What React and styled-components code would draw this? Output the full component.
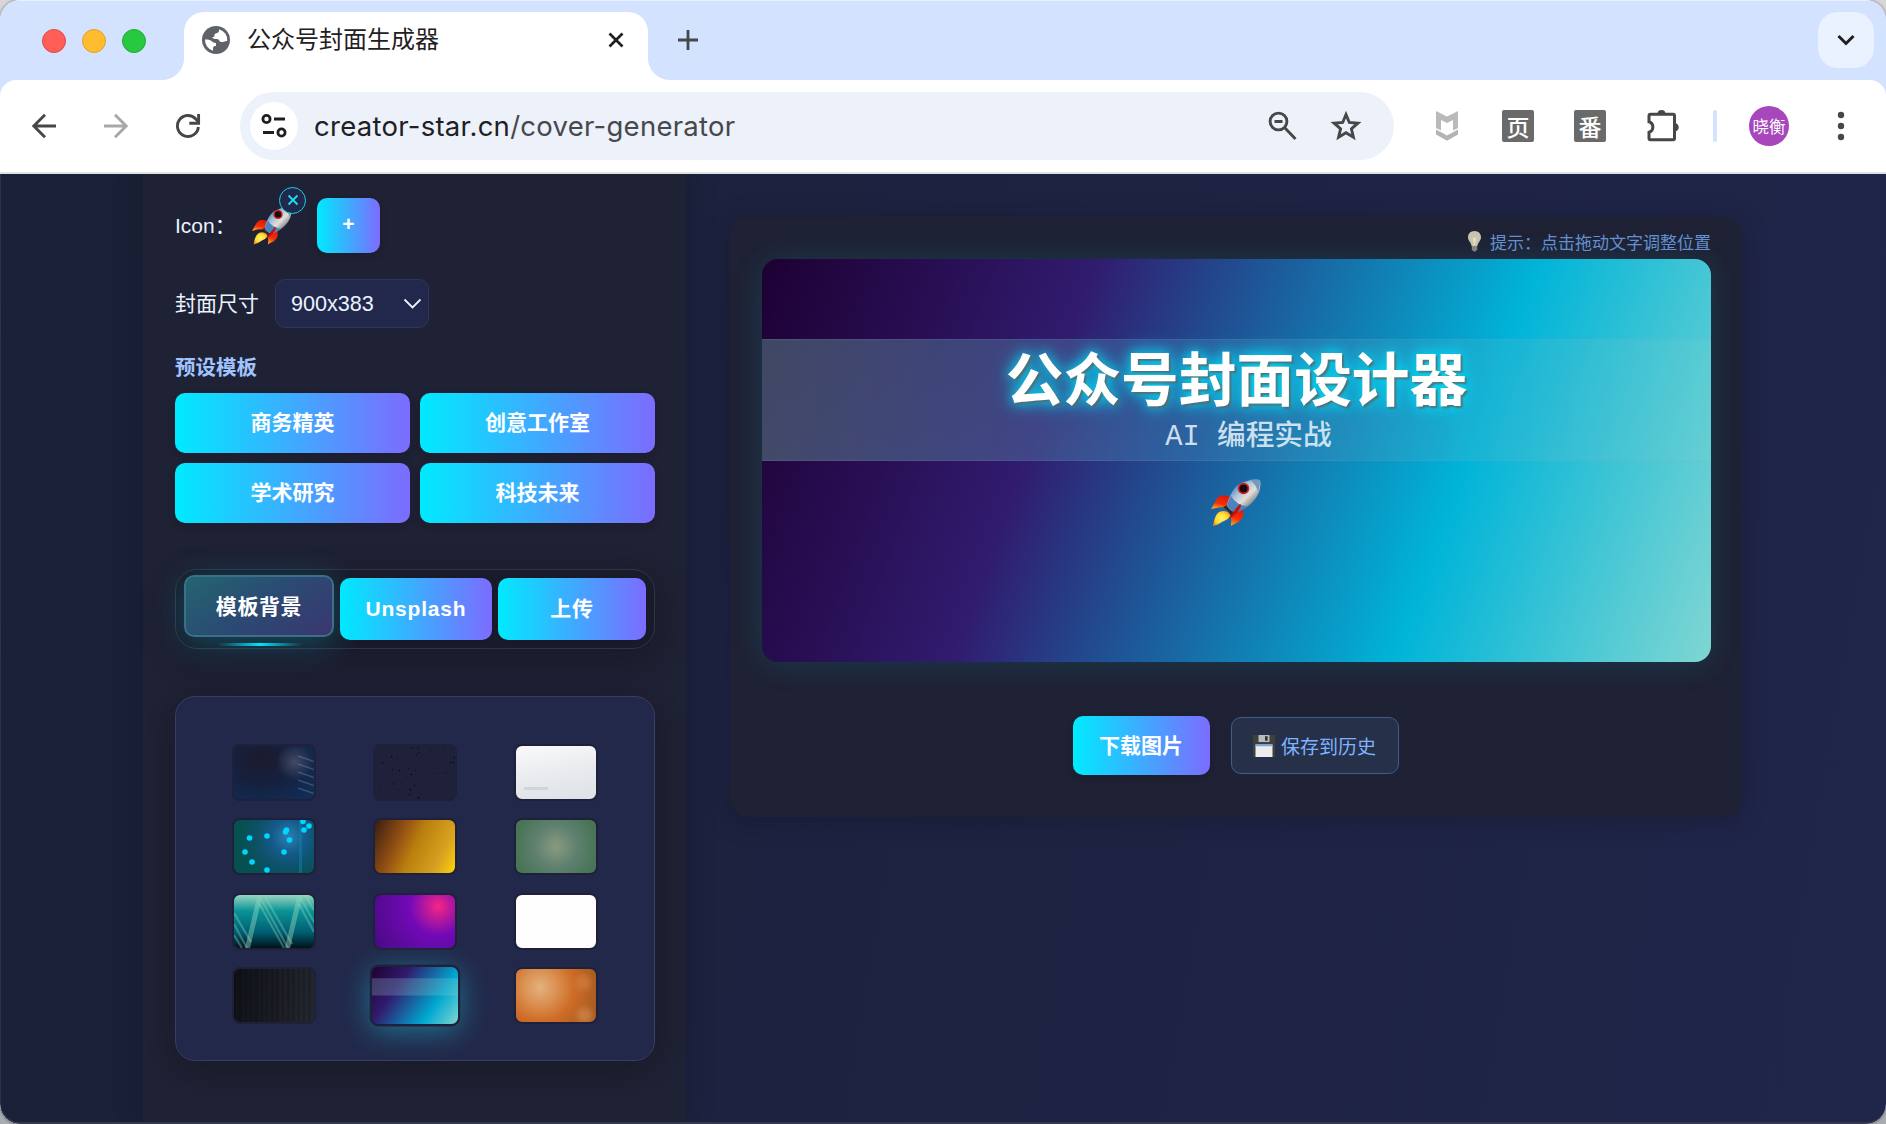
import React from "react";
import styled, { createGlobalStyle, css } from "styled-components";

const Global = createGlobalStyle`
  * { box-sizing: border-box; }
  body {
    margin: 0;
    background: linear-gradient(180deg, #d9d6d8 0%, #a9adb1 100%);
    font-family: "Liberation Sans", "Noto Sans CJK SC", sans-serif;
    overflow: hidden;
  }
  button { font-family: inherit; border: 0; margin: 0; padding: 0; }
  svg { display: block; flex: none; }
`;

const accent = "linear-gradient(90deg, #00eaff 0%, #7c6cff 100%)";

/* ---------- browser window ---------- */

const Window = styled.div`
  display: flex;
  flex-direction: column;
  width: 1886px;
  height: 1124px;
  border-radius: 20px;
  overflow: hidden;
  background: #d3e2ff;
  box-shadow: 0 0 3px rgba(0, 0, 0, 0.5);
`;

const TabStrip = styled.header`
  display: flex;
  align-items: flex-start;
  height: 80px;
  flex: none;
  padding: 11px 12px 0 42px;
  background: #d3e2ff;
  border-top: 1px solid #eaf0fc;
`;

const Lights = styled.div`
  display: flex;
  gap: 16px;
  width: 142px;
  padding-top: 17px;
`;

const Light = styled.span`
  width: 24px;
  height: 24px;
  border-radius: 50%;
  background: ${(p) => p.$fill};
  border: 1px solid ${(p) => p.$edge};
`;

const Tab = styled.div`
  position: relative;
  display: flex;
  align-items: center;
  width: 464px;
  height: 68px;
  padding: 0 22px 12px 18px;
  border-radius: 20px 20px 0 0;
  background: #fff;

  &::before,
  &::after {
    content: "";
    position: absolute;
    bottom: 0;
    width: 22px;
    height: 22px;
  }
  &::before {
    left: -22px;
    background: radial-gradient(circle at 0 0, transparent 21.5px, #fff 22.5px);
  }
  &::after {
    right: -22px;
    background: radial-gradient(circle at 100% 0, transparent 21.5px, #fff 22.5px);
  }
`;

const TabTitle = styled.span`
  flex: 1;
  margin-left: 17px;
  font: 400 24px/34px "Noto Sans CJK SC", sans-serif;
  color: #1f2023;
  white-space: nowrap;
  padding-bottom: 4px;
`;

const NewTab = styled.div`
  padding: 17px 0 0 29px;
  flex: 1;
`;

const TabSearch = styled.div`
  display: grid;
  place-items: center;
  width: 56px;
  height: 56px;
  border-radius: 20px;
  background: #ebf2ff;
`;

const Toolbar = styled.div`
  display: flex;
  align-items: center;
  height: 94px;
  flex: none;
  padding: 0 28px;
  background: #fff;
  border-radius: 16px 16px 0 0;
  border-bottom: 2px solid #dfe2e0;
`;

const NavIcons = styled.div`
  display: flex;
  gap: 40px;
  width: 212px;
`;

const Omnibox = styled.div`
  display: flex;
  align-items: center;
  width: 1154px;
  height: 68px;
  padding: 0 32px 0 10px;
  border-radius: 34px;
  background: #ecf1fa;
`;

const SiteInfo = styled.span`
  display: grid;
  place-items: center;
  width: 48px;
  height: 48px;
  border-radius: 50%;
  background: #fff;
`;

const Url = styled.span`
  flex: 1;
  margin-left: 16px;
  font: 400 27.5px/36px Inter, "Noto Sans", sans-serif;
  letter-spacing: 0.27px;
  color: #1f2023;
  white-space: nowrap;
`;

const UrlPath = styled.span`
  color: #47484b;
`;

const OmniIcons = styled.div`
  display: flex;
  align-items: center;
  gap: 32px;
`;

const Extensions = styled.div`
  display: flex;
  align-items: center;
  gap: 40px;
  padding-left: 42px;
`;

const ShieldSlot = styled.span`
  width: 26px;
`;

const Profile = styled.div`
  display: flex;
  align-items: center;
  margin-left: 33px;
`;

const ExtBadge = styled.span`
  display: grid;
  place-items: center;
  width: 32px;
  height: 32px;
  border-radius: 2px;
  background: #6a6a6a;
  color: #fff;
  font: 500 23px/30px "Noto Sans CJK SC", sans-serif;
`;

const Divider = styled.span`
  width: 4px;
  height: 32px;
  margin-right: 32px;
  border-radius: 2px;
  background: #d3e2ff;
`;

const Avatar = styled.span`
  display: grid;
  place-items: center;
  width: 40px;
  height: 40px;
  margin-right: 48px;
  border-radius: 50%;
  background: #a846bc;
  color: #fff;
  font: 400 16.5px/24px "Noto Sans CJK SC", sans-serif;
`;

/* ---------- page ---------- */

const Page = styled.main`
  display: flex;
  align-items: flex-start;
  flex: 1;
  min-height: 0;
  padding-left: 142px;
  gap: 44px;
  overflow: hidden;
  background: linear-gradient(100deg, #1a2035 0%, #1d2240 45%, #20264a 100%);
  border-left: 1px solid #2e3348;
  border-bottom: 2px solid #34384c;
  border-radius: 0 0 20px 20px;
`;

const Sidebar = styled.aside`
  width: 543px;
  height: 948px;
  padding: 24px 31px 0 32px;
  background: #1f2134;
  box-shadow: 0 0 24px rgba(15, 18, 32, 0.35);
`;

const FieldRow = styled.div`
  display: flex;
  align-items: center;
  margin-bottom: ${(p) => p.$after}px;
`;

const Label = styled.span`
  width: ${(p) => p.$width}px;
  font-size: 21px;
  line-height: 30px;
  color: #eaf4ff;
  white-space: nowrap;
`;

const IconSlot = styled.div`
  position: relative;
  width: 40px;
  height: 40px;
  margin-right: 25px;
`;

const RemoveBadge = styled.span`
  position: absolute;
  top: -19px;
  right: -14px;
  display: grid;
  place-items: center;
  width: 27px;
  height: 27px;
  border: 1.5px solid #1ccfe6;
  border-radius: 50%;
  background: #20284c;
`;

const GradientButton = styled.button`
  width: ${(p) => (p.$width ? p.$width + "px" : "auto")};
  height: ${(p) => p.$height}px;
  border-radius: 10px;
  background: ${accent};
  color: #fff;
  font-size: 21px;
  font-weight: 700;
  line-height: 30px;
  letter-spacing: ${(p) => p.$spacing || 0}px;
  padding-bottom: ${(p) => p.$lift || 0}px;
  white-space: nowrap;
  box-shadow: 0 3px 10px rgba(0, 0, 0, 0.12);
`;

const SizeSelect = styled.div`
  display: flex;
  align-items: center;
  justify-content: space-between;
  width: 154px;
  height: 49px;
  padding: 0 6px 0 15px;
  border: 1px solid #2d355e;
  border-radius: 10px;
  background: #21284b;
  color: #eaf4ff;
  font-size: 21.6px;
`;

const SectionTitle = styled.h2`
  margin: 0 0 10px;
  font-size: 20.5px;
  line-height: 30px;
  font-weight: 700;
  color: #a0c4ff;
`;

const PresetGrid = styled.div`
  display: grid;
  grid-template-columns: 1fr 1fr;
  gap: 10px;
  margin-bottom: 46px;
`;

const TabBar = styled.div`
  display: flex;
  gap: 6px;
  height: 80px;
  margin-bottom: 47px;
  padding: 8px 8px;
  border: 1px solid #303447;
  border-radius: 22px;
  background: #191c2b;
  box-shadow: 0 10px 36px rgba(0, 0, 0, 0.22);
`;

const ActiveTab = styled.button`
  position: relative;
  width: 150px;
  height: 62px;
  margin-top: -3px;
  padding-bottom: 2px;
  border: 2px solid #39718a;
  border-radius: 10px;
  background: linear-gradient(145deg, #23666f 0%, #2b4a73 50%, #3b366f 100%);
  background-origin: border-box;
  color: #fff;
  font-size: 21px;
  font-weight: 700;
  letter-spacing: 0.6px;
  box-shadow: 0 6px 34px rgba(0, 229, 255, 0.24);

  &::after {
    content: "";
    position: absolute;
    left: 32px;
    right: 30px;
    bottom: -11px;
    height: 3px;
    background: linear-gradient(90deg, transparent, #00e5ff, transparent);
  }
`;

const Gallery = styled.div`
  display: grid;
  grid-template-columns: repeat(3, 1fr);
  grid-auto-rows: 57px;
  row-gap: 17.3px;
  justify-items: center;
  height: 365px;
  padding: 47px 27px 0;
  border: 1px solid #383e61;
  border-radius: 20px;
  background: #222849;
  box-shadow: 0 8px 30px rgba(0, 0, 0, 0.2);
`;

const Thumb = styled.div`
  width: 84px;
  height: 57px;
  border: 2px solid #1e2139;
  border-radius: 8px;
  overflow: hidden;
  background: ${(p) => p.$bg};
  background-origin: padding-box;
  ${(p) =>
    p.$active &&
    css`
      transform: scale(1.075);
      box-shadow: 0 5px 28px rgba(30, 215, 245, 0.42);
    `}
`;

/* ---------- preview ---------- */

const PreviewCard = styled.section`
  width: 1012px;
  height: 600px;
  margin-top: 43px;
  padding: 8px 31px 0 32px;
  border-radius: 18px;
  background: #1f2134;
  box-shadow: 0 4px 24px rgba(15, 18, 36, 0.35);
`;

const Hint = styled.div`
  display: flex;
  justify-content: flex-end;
  align-items: center;
  gap: 8px;
  height: 32px;
  margin-bottom: 2px;
  font-size: 17px;
  color: #6290d0;
  white-space: nowrap;
`;

const Cover = styled.div`
  height: 403px;
  padding-top: 80px;
  border-radius: 16px;
  overflow: hidden;
  background: linear-gradient(110deg, #1d0033 0%, #311b6e 30.5%, #00b4d8 71%, #80d6d2 100%);
  box-shadow: 0 2px 32px rgba(0, 229, 255, 0.13);
`;

const Band = styled.div`
  display: flex;
  flex-direction: column;
  align-items: center;
  height: 122px;
  background: linear-gradient(90deg, rgba(140, 230, 200, 0.3), rgba(80, 150, 200, 0.25) 45%, rgba(120, 210, 205, 0.2));
  border: solid rgba(140, 150, 200, 0.16);
  border-width: 1px 0;
`;

const CoverTitle = styled.div`
  height: 73px;
  font: 700 57.7px/73px "Noto Sans CJK SC", sans-serif;
  color: #fff;
  white-space: nowrap;
  text-shadow: 2px 2px 2px rgba(90, 100, 100, 0.8), 0 0 12px #00d9f5, 0 0 20px rgba(0, 217, 245, 0.9);
`;

const CoverSubtitle = styled.div`
  margin: 8px 0 0 24px;
  font: 500 28.7px/34px "Liberation Mono", "Noto Sans CJK SC", monospace;
  color: rgba(226, 240, 250, 0.88);
  white-space: pre;
`;

const CoverIcon = styled.div`
  display: flex;
  justify-content: center;
  margin-top: 18px;
  padding-right: 2px;
`;

const Actions = styled.div`
  display: flex;
  justify-content: center;
  align-items: center;
  gap: 21px;
  margin-top: 54px;
  padding-right: 2px;
`;

const SaveButton = styled.button`
  display: flex;
  align-items: center;
  justify-content: center;
  gap: 6px;
  width: 168px;
  height: 57px;
  border: 1px solid #3f5d8c;
  border-radius: 10px;
  background: #273049;
  color: #7db4ff;
  font-size: 19px;
  white-space: nowrap;
`;

/* ---------- drawings ---------- */

function Rocket({ id, width, height }) {
  return (
    <svg width={width} height={height} viewBox="0 0 50 48">
      <defs>
        <linearGradient id={id + "b"} x1="0.2" y1="0.2" x2="0.8" y2="0.8">
          <stop offset="0" stopColor="#4f86c4" />
          <stop offset="0.3" stopColor="#a9c2d6" />
          <stop offset="0.6" stopColor="#e2e0da" />
          <stop offset="1" stopColor="#6d7075" />
        </linearGradient>
        <linearGradient id={id + "f"} x1="0.6" y1="0" x2="0.3" y2="1">
          <stop offset="0" stopColor="#e01505" />
          <stop offset="0.6" stopColor="#f5300a" />
          <stop offset="1" stopColor="#ffa81f" />
        </linearGradient>
        <radialGradient id={id + "y"} cx="0.5" cy="0.5" r="0.6">
          <stop offset="0" stopColor="#fff46a" />
          <stop offset="0.6" stopColor="#ffd832" />
          <stop offset="1" stopColor="#f28a12" />
        </radialGradient>
      </defs>
      <path d="M0 30C3 26 5 19 9 17c4-1 7 0 11 1l-5 11C10 27 5 29 0 30Z" fill={`url(#${id}f)`} />
      <path d="M32 28c0 4 1 8-1 11-3 5-7 5-11 8 0-4 1-7-1-11Z" fill={`url(#${id}f)`} />
      <path d="M2 47c1-5 2-11 6-14 4-2 9-1 11 2 1 4-4 6-8 8-3 2-5 3-9 4Z" fill={`url(#${id}y)`} />
      <path d="m12 28 7-3 6 7-4 6-4-6Z" fill="#342832" />
      <path d="M49 1C41 0 33 2 27 6c-5 4-10 13-11 21 2 3 5 6 9 6 6-1 15-7 20-14 4-6 5-12 4-18Z" fill={`url(#${id}b)`} />
      <path d="M16 27c1-3 2-7 4-10 3 5 9 10 16 10-4 4-8 6-11 6-4 0-7-3-9-6Z" fill="#4b83bf" />
      <path d="M39 1c4-1 8 0 10 0 0 3 0 7-2 12-1-5-4-9-8-12Z" fill="#7799bb" />
      <circle cx="32.5" cy="9.5" r="5.8" fill="#d91d22" />
      <circle cx="32.5" cy="9.5" r="4" fill="#130d10" />
      <path d="M29 25c-3 3-8 9-11 15 6-4 11-8 12-14Z" fill="#c01408" />
    </svg>
  );
}

const Globe = () => (
  <svg width="28" height="28" viewBox="0 0 28 28">
    <circle cx="14" cy="14" r="14" fill="#5f6368" />
    <path d="M3 13.5c3 0 5 .2 6.500 1.500 1.500 1 2 2 4.500 2v3c-2 0-3 .5-3 2.300v2.500A11.300 11.300 0 0 1 3 13.500ZM17 3.200c.5 2-.4 3.600-2.500 4-1.500.2-2 .8-2 2 0 1.500-.8 2-2.500 2 1 1.500 2.500 1.800 4.500 1.800 2 0 2.500.9 3 2 .5 1 1.500 1.300 3 1 1.700-.3 3-1 4.800-1A11.300 11.300 0 0 0 17 3.200Z" fill="#fff" />
  </svg>
);

const stroke = (color, width) => ({ fill: "none", stroke: color, strokeWidth: width });

const Arrow = ({ color, flip }) => (
  <svg width="32" height="32" viewBox="0 0 32 32" transform={flip ? "scale(-1 1)" : undefined}>
    <path d="M28 16H6M17 4.800 5.800 16l11.200 11.200" {...stroke(color, 2.9)} />
  </svg>
);

const Reload = () => (
  <svg width="32" height="32" viewBox="0 0 32 32">
    <path d="M26.400 17A10.500 10.500 0 1 1 23.800 9L26.500 12" {...stroke("#474747", 2.9)} />
    <path d="M26.600 4v9.300h-9.300" {...stroke("#474747", 2.9)} />
  </svg>
);

const Tune = () => (
  <svg width="28" height="28" viewBox="0 0 28 28" {...stroke("#1f1f1f", 2.8)}>
    <circle cx="6.500" cy="7" r="3.600" />
    <path d="M14 7h11M3 20.500h11" />
    <circle cx="21.500" cy="20.500" r="3.600" />
  </svg>
);

const Magnifier = () => (
  <svg width="30" height="30" viewBox="0 0 30 30" {...stroke("#474747", 2.9)}>
    <circle cx="10.500" cy="10.500" r="8.400" />
    <path d="M16.500 16.500l11 11.500M6.500 10.500h8" />
  </svg>
);

const Star = () => (
  <svg width="32" height="32" viewBox="0 0 32 32">
    <path d="m16 4.500 3.300 8 8.600.7-6.500 5.600 2 8.400-7.400-4.500-7.400 4.500 2-8.400-6.500-5.600 8.600-.7Z" {...stroke("#474747", 2.9)} />
  </svg>
);

const ShieldMark = () => (
  <svg width="22" height="30" viewBox="0 0 22 30">
    <path d="M0 0 11 5.500 22 0v17l-5 2.500V9l-6 3-6-3v10.500L0 17Z" fill="#b9bbbb" />
    <path d="m0 18.500 11 6 11-6v5l-11 6.300-11-6.300Z" fill="#b3b5b5" />
  </svg>
);

const Puzzle = () => (
  <svg width="34" height="34" viewBox="0 0 34 34">
    <path
      d="M4.500 5.300h22.500a1.500 1.500 0 0 1 1.500 1.500v22.500a1.500 1.500 0 0 1-1.500 1.500H4.500a1.500 1.500 0 0 1-1.500-1.500v-6a5.500 5.500 0 0 0 0-10.500V6.800a1.500 1.500 0 0 1 1.500-1.500Z"
      {...stroke("#474747", 3)}
    />
    <path d="M11.500 5a4 4 0 0 1 8 0ZM28.500 14a4 4 0 0 1 0 8.500Z" fill="#474747" />
  </svg>
);

const Kebab = () => (
  <svg width="8" height="32" viewBox="0 0 8 32" fill="#474747">
    <circle cx="4" cy="5" r="3.200" />
    <circle cx="4" cy="16" r="3.200" />
    <circle cx="4" cy="27" r="3.200" />
  </svg>
);

const Bulb = () => (
  <svg width="15" height="22" viewBox="0 0 15 22">
    <path d="M7.500 1C3.500 1 1 3.800 1 7.300c0 3.500 3 5 3.600 8.700h5.800C11 12.300 14 10.800 14 7.300 14 3.800 11.500 1 7.500 1Z" fill="#c9c3b4" />
    <path d="M5.500 7.500 7 15h1l1.500-7.500Z" fill="#e8dfae" />
    <path d="M4.800 16h5.400v3.500L8.500 21.500h-2l-1.700-2Z" fill="#85837f" />
  </svg>
);

const Floppy = () => (
  <svg width="22" height="22" viewBox="0 0 22 22">
    <path d="M0 0h22v22H0Z" fill="#3f3f40" />
    <path d="M5.500 0h11v7h-11Z" fill="#b8babb" />
    <path d="M12 1.200h2.600v4.500H12Z" fill="#333" />
    <path d="M2.500 9.500h17V22h-17Z" fill="#ededed" />
    <path d="M2.500 9.500h17v1.800h-17Z" fill="#73aee6" />
  </svg>
);

const MeshLines = () => (
  <svg width="80" height="53" viewBox="0 0 80 53">
    {[10, 18, 26, 34, 42].map((y) => (
      <path key={y} d={`M64 ${y}l16 5.500`} stroke="#8aa0b8" strokeOpacity="0.32" strokeWidth="1.500" />
    ))}
  </svg>
);

const SPECKS = [
  [36, 1, 0.8], [43, 2, 0.6], [43, 6, 0.6], [56, 4, 0.3], [69, 2, 0.3], [16, 10, 1], [22, 12, 0.3],
  [41, 8, 0.6], [79, 11, 1], [7, 16, 0.9], [75, 16, 1], [78, 16, 0.5], [17, 23, 0.7], [24, 24, 1],
  [33, 22, 0.4], [40, 24, 0.5], [50, 21, 0.2], [51, 25, 0.3], [36, 28, 1], [32, 30, 0.3], [59, 27, 0.5],
  [69, 26, 0.5], [72, 27, 0.3], [64, 36, 0.2], [18, 37, 0.4], [39, 39, 0.8], [35, 43, 0.8], [22, 43, 0.4],
  [34, 48, 0.7], [43, 51, 1], [4, 40, 0.2], [4, 44, 0.2],
];

const Specks = () => (
  <svg width="80" height="53" viewBox="0 0 80 53">
    {SPECKS.map(([x, y, o]) => (
      <circle key={`${x}-${y}`} cx={x + 0.5} cy={y + 0.5} r="0.850" fill="#05070f" opacity={o} />
    ))}
  </svg>
);

const Caption = () => (
  <svg width="80" height="53" viewBox="0 0 80 53">
    <path d="M8 41h24v3H8Z" fill="#cfd5dc" />
  </svg>
);

const DOTS = [[15.5, 18], [33, 16], [11, 32], [18, 42], [33, 50], [50, 32], [55.5, 20], [52.5, 10], [51.5, 12], [69, 1.5], [75, 6], [70, 10]];

const Bubbles = () => (
  <svg width="80" height="53" viewBox="0 0 80 53">
    <path d="M65 0h3v53h-3Z" fill="#0a84a8" opacity="0.5" />
    {DOTS.map(([x, y]) => (
      <circle key={`${x}-${y}`} cx={x} cy={y} r="2.800" fill="#00d5ff" />
    ))}
  </svg>
);

const Ribbons = () => (
  <svg width="80" height="53" viewBox="0 0 80 53" stroke="#8fd6c0" strokeOpacity="0.36">
    <path d="M13.500 53 26 0M53.500 53 66 0" strokeWidth="5" strokeOpacity="0.45" />
    <path d="M0 18 17 47M0 29 13 53M0 40 8 53M26 2 54 53M30 0 58 49M25 8 50 53M66 2 80 27M71 0 80 15M65 9 80 37" fill="none" strokeWidth="2.200" />
  </svg>
);

const GlassStripe = () => (
  <svg width="80" height="53" viewBox="0 0 80 53">
    <path d="M0 10.500h80v16H0Z" fill="#8fc8cc" opacity="0.270" />
  </svg>
);

const THUMBS = [
  { id: "navy", art: <MeshLines />, bg: "radial-gradient(circle at 76% 30%, rgba(75,85,110,.8) 0, transparent 26%), radial-gradient(ellipse at 34% 25%, #1c1a2e 0, #15213f 45%, #10305c 100%)" },
  { id: "specks", art: <Specks />, bg: "#1e2139" },
  { id: "paper", art: <Caption />, bg: "linear-gradient(170deg, #fafafb, #e9ebee 50%, #dde1e5)" },
  { id: "bubbles", art: <Bubbles />, bg: "radial-gradient(circle at 68% 32%, #2b80b5 0, #145a88 26%, rgba(18,82,120,.6) 48%, transparent 75%), #06504f" },
  { id: "gold", bg: "linear-gradient(115deg, #3a1d12 0, #985413 33%, #b97f0e 50%, #d9a220 80%, #fdd406 100%)" },
  { id: "moss", bg: "radial-gradient(circle at 50% 50%, #8a9a7d 0, #5e8070 45%, #487556 85%)" },
  { id: "lagoon", art: <Ribbons />, bg: "linear-gradient(180deg, #98d6c0 0, #0a9396 30%, #005f73 70%, #001219 100%)" },
  { id: "violet", bg: "radial-gradient(circle at 79% 22%, #f72585 0, #c21b98 14%, #7209b7 38%, #480a80 100%)" },
  { id: "white", bg: "#fefefe" },
  { id: "carbon", bg: "repeating-linear-gradient(90deg, rgba(0,0,0,.16) 0 2.5px, transparent 2.5px 5.3px), linear-gradient(100deg, #0e1116, #252830)" },
  { id: "aurora", active: true, art: <GlassStripe />, bg: "linear-gradient(125deg, #1d0033 0%, #311b6e 31%, #00a8d0 71%, #80d6d2 100%)" },
  { id: "amber", bg: "radial-gradient(circle at 84% 26%, rgba(216,130,70,.5) 0 5%, transparent 14%), radial-gradient(circle at 86% 88%, rgba(222,150,90,.5) 0 4%, transparent 14%), radial-gradient(circle at 30% 35%, #e2b27e 0, #db9052 26%, #cd6c26 52%, #9c5620 100%)" },
];

const PRESETS = ["商务精英", "创意工作室", "学术研究", "科技未来"];

export default function App() {
  return (
    <>
      <Global />
      <Window>
        <TabStrip>
          <Lights>
            <Light $fill="#ff5f57" $edge="#e2463f" />
            <Light $fill="#febc2e" $edge="#e0a028" />
            <Light $fill="#28c840" $edge="#1dab2f" />
          </Lights>
          <Tab>
            <Globe />
            <TabTitle>公众号封面生成器</TabTitle>
            <svg width="20" height="20" viewBox="0 0 20 20">
              <path d="m3.500 3.500 13 13M16.500 3.500l-13 13" {...stroke("#1f1f1f", 2.7)} />
            </svg>
          </Tab>
          <NewTab>
            <svg width="22" height="22" viewBox="0 0 22 22">
              <path d="M11 1v20M1 11h20" {...stroke("#474747", 2.8)} />
            </svg>
          </NewTab>
          <TabSearch>
            <svg width="20" height="14" viewBox="0 0 20 14">
              <path d="m2.500 3 7.500 7.500L17.500 3" {...stroke("#1f1f1f", 3)} />
            </svg>
          </TabSearch>
        </TabStrip>

        <Toolbar>
          <NavIcons>
            <Arrow color="#474747" />
            <Arrow color="#a8a8a8" flip />
            <Reload />
          </NavIcons>
          <Omnibox>
            <SiteInfo>
              <Tune />
            </SiteInfo>
            <Url>
              creator-star.cn<UrlPath>/cover-generator</UrlPath>
            </Url>
            <OmniIcons>
              <Magnifier />
              <Star />
            </OmniIcons>
          </Omnibox>
          <Extensions>
            <ShieldSlot>
              <ShieldMark />
            </ShieldSlot>
            <ExtBadge>页</ExtBadge>
            <ExtBadge>番</ExtBadge>
            <Puzzle />
          </Extensions>
          <Profile>
            <Divider />
            <Avatar>晓衡</Avatar>
            <Kebab />
          </Profile>
        </Toolbar>

        <Page>
          <Sidebar>
            <FieldRow $after={26}>
              <Label $width={77}>Icon：</Label>
              <IconSlot>
                <Rocket id="side" width={40} height={40} />
                <RemoveBadge>
                  <svg width="12" height="12" viewBox="0 0 12 12">
                    <path d="m1.500 1.500 9 9M10.500 1.500l-9 9" {...stroke("#1fdcf2", 1.8)} />
                  </svg>
                </RemoveBadge>
              </IconSlot>
              <GradientButton $width={63} $height={55} $lift={3}>+</GradientButton>
            </FieldRow>

            <FieldRow $after={25}>
              <Label $width={100}>封面尺寸</Label>
              <SizeSelect>
                900x383
                <svg width="19" height="12" viewBox="0 0 19 12">
                  <path d="m1.500 1.500 8 8 8-8" {...stroke("#eaf4ff", 1.8)} />
                </svg>
              </SizeSelect>
            </FieldRow>

            <SectionTitle>预设模板</SectionTitle>
            <PresetGrid>
              {PRESETS.map((name) => (
                <GradientButton key={name} $height={60}>{name}</GradientButton>
              ))}
            </PresetGrid>

            <TabBar>
              <ActiveTab>模板背景</ActiveTab>
              <GradientButton $width={152} $height={62} $spacing={0.8} $lift={1}>Unsplash</GradientButton>
              <GradientButton $width={148} $height={62} $spacing={0.8}>上传</GradientButton>
            </TabBar>

            <Gallery>
              {THUMBS.map((t) => (
                <Thumb key={t.id} $bg={t.bg} $active={t.active}>
                  {t.art}
                </Thumb>
              ))}
            </Gallery>
          </Sidebar>

          <PreviewCard>
            <Hint>
              <Bulb />
              提示：点击拖动文字调整位置
            </Hint>
            <Cover>
              <Band>
                <CoverTitle>公众号封面设计器</CoverTitle>
                <CoverSubtitle>AI 编程实战</CoverSubtitle>
              </Band>
              <CoverIcon>
                <Rocket id="cover" width={50} height={48} />
              </CoverIcon>
            </Cover>
            <Actions>
              <GradientButton $width={137} $height={59}>下载图片</GradientButton>
              <SaveButton>
                <Floppy />
                保存到历史
              </SaveButton>
            </Actions>
          </PreviewCard>
        </Page>
      </Window>
    </>
  );
}
